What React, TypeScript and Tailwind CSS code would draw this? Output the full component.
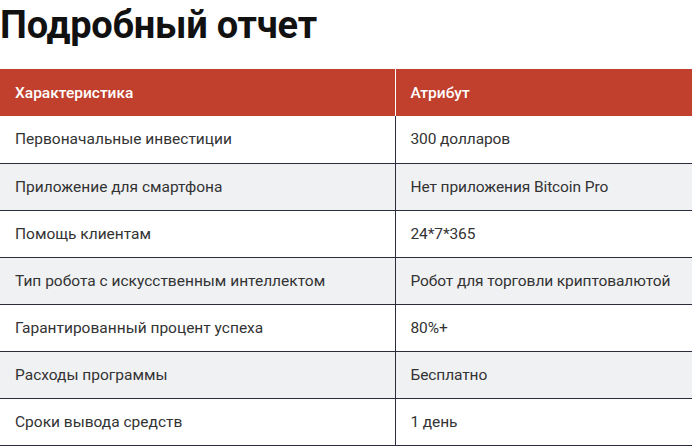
const rows: [string, string][] = [
  ["Первоначальные инвестиции", "300 долларов"],
  ["Приложение для смартфона", "Нет приложения Bitcoin Pro"],
  ["Помощь клиентам", "24*7*365"],
  ["Тип робота с искусственным интеллектом", "Робот для торговли криптовалютой"],
  ["Гарантированный процент успеха", "80%+"],
  ["Расходы программы", "Бесплатно"],
  ["Сроки вывода средств", "1 день"],
];

export default function App() {
  return (
    <div className="w-[692px] h-[448px] overflow-hidden bg-white font-['Roboto',sans-serif]">
      <h2 className="pt-[2px] mb-[21px] text-[38px] leading-[46px] font-bold text-[#111] tracking-[-0.2px]">
        Подробный отчет
      </h2>
      <table className="w-full table-fixed border-collapse whitespace-nowrap text-[15.5px] leading-[22px]">
        <thead>
          <tr className="h-[47px] bg-[#c0402d] text-white">
            <th className="w-[395px] border-r border-white px-[15px] py-0 text-left font-medium">
              Характеристика
            </th>
            <th className="px-[15px] py-0 text-left font-medium">Атрибут</th>
          </tr>
        </thead>
        <tbody>
          {rows.map(([k, v], i) => (
            <tr
              key={k}
              className={`h-[47px] border-b border-[#2b2d3c] text-[#333] ${i % 2 === 1 ? "bg-[#f0f1f3]" : "bg-white"}`}
            >
              <td className="border-r border-[#2b2d3c] px-[15px] py-0">{k}</td>
              <td className="px-[15px] py-0 tracking-[-0.1px]">{v}</td>
            </tr>
          ))}
        </tbody>
      </table>
    </div>
  );
}
